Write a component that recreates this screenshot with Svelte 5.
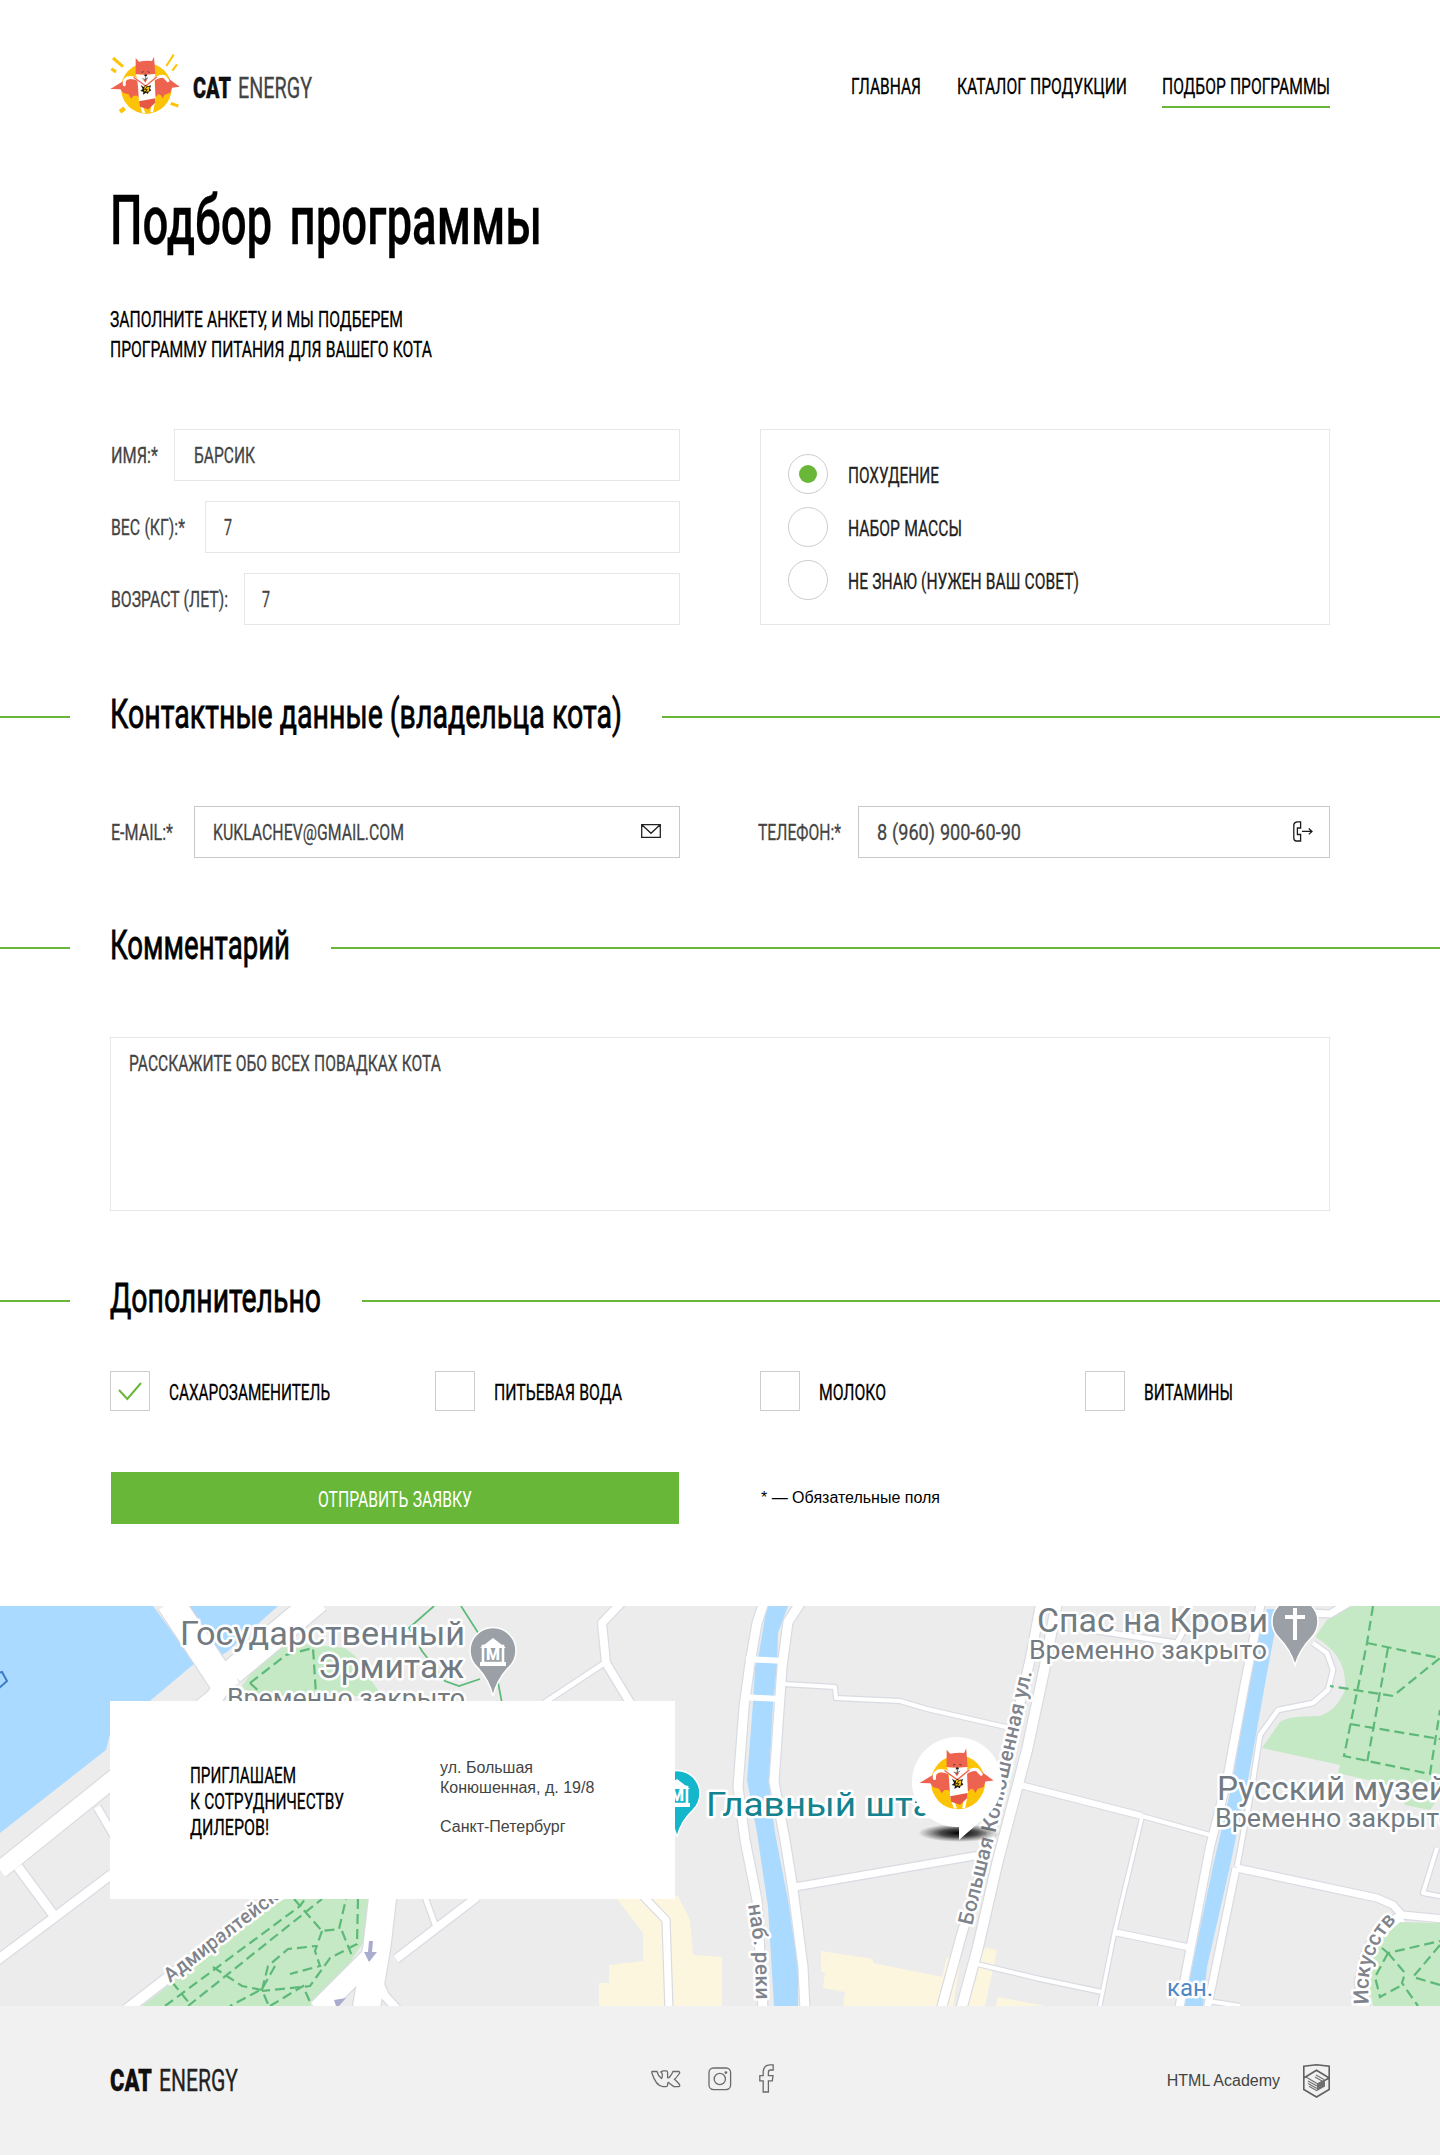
<script>
  const nav = [
    { text: 'ГЛАВНАЯ', w: 70, gap: 36 },
    { text: 'КАТАЛОГ ПРОДУКЦИИ', w: 170, gap: 35 },
    { text: 'ПОДБОР ПРОГРАММЫ', w: 168, gap: 0, active: true }
  ];
  const cat = [
    { label: 'ИМЯ:*', lw: 47, box: 506, value: 'БАРСИК', vw: 61, pad: 19 },
    { label: 'ВЕС (КГ):*', lw: 74, box: 475, value: '7', vw: 8, pad: 18 },
    { label: 'ВОЗРАСТ (ЛЕТ):', lw: 117, box: 436, value: '7', vw: 8, pad: 17 }
  ];
  const goals = [
    { text: 'ПОХУДЕНИЕ', w: 91, on: true },
    { text: 'НАБОР МАССЫ', w: 114 },
    { text: 'НЕ ЗНАЮ (НУЖЕН ВАШ СОВЕТ)', w: 231 }
  ];
  const extras = [
    { text: 'САХАРОЗАМЕНИТЕЛЬ', w: 161, on: true },
    { text: 'ПИТЬЕВАЯ ВОДА', w: 128 },
    { text: 'МОЛОКО', w: 67 },
    { text: 'ВИТАМИНЫ', w: 89 }
  ];
  // Streets: points and width
  const roads = [
    ['170,-4 228,84', 27], ['318,-6 232,66 214,92 0,264', 17], ['318,-6 232,66', 25],
    ['97,201 114,230', 7], ['18,261 55,311', 9], ['-4,355 55,311 112,268', 9],
    ['126,404 170,370 275,288', 10], ['383,288 377,340 366,404', 27], ['370,352 318,404', 20],
    ['396,353 477,291', 8], ['425,291 436,321', 5], ['368,352 385,390 398,404', 8],
    ['622,-4 602,17 606,57 632,100', 8], ['606,56 544,97', 5],
    ['643,290 666,314 669,404', 7],
    ['764,-4 757,17 750,57 744,101 738,181 745,234 757,294 763,404', 9],
    ['801,-4 788,16 782,61 774,176 785,234 793,284 803,361 805,404', 9],
    ['784,78 835,81 836,92 900,95 927,103 1010,122', 4],
    ['795,281 980,249', 7],
    ['1041,-4 1030,54 1003,170 985,254 962,327 941,404', 9],
    ['1057,-4 1045,60 1027,144 998,254 978,341 961,404', 10],
    ['1020,179 1040,184 1142,210', 6], ['1142,210 1210,229', 4],
    ['1142,211 1115,324 1099,404', 3.5], ['1114,326 1187,341', 6], ['973,357 1040,373 1102,386', 4],
    ['1090,24 1177,37 1187,18', 5],
    ['1261,-4 1245,77 1227,174 1210,241 1187,361 1179,404', 8],
    ['1313,37 1327,47 1333,64 1328,84 1313,97 1278,104 1260,129 1252,181 1237,261', 4.5],
    ['1236,262 1207,404', 7], ['1237,262 1377,292 1393,299 1402,309 1444,313', 7],
    ['1402,311 1384,322 1368,345 1361,375 1364,404', 12],
    ['1437,242 1423,287 1444,291', 4], ['1310,7 1330,8 1350,-4', 7], ['1208,395 1240,400', 4]
  ];
  const bridges = ['746,53 784,55', '742,91 780,93'];
  const trails = [
    '250,77 286,49 313,42 316,88', '250,77 262,88',
    '165,400 300,300 305,293', '188,400 322,293', '275,360 262,383 230,400', '294,293 322,325 339,323 346,293',
    '358,293 357,338 330,352 310,380 262,385', '172,376 190,398', '213,361 242,380 262,384 268,398', '322,325 315,345 320,360 290,368',
    '262,384 268,360 288,343 316,340', '342,325 352,350', '270,400 303,380 310,396',
    '1373,0 1367,37 1344,150 1430,168 1440,104', '1367,37 1440,52 1393,90 1330,80', '1388,42 1367,157', '1350,118 1440,133',
    '1382,342 1388,347 1440,335', '1388,347 1405,367 1402,377 1418,400', '1388,347 1375,371 1380,391 1402,379', '1440,339 1413,371 1440,379'
  ];
</script>

<!-- Condensed lettering: cap height and advance width are set explicitly -->
{#snippet cond(text, w, cap = 16, cls = '')}
  <svg class="cond {cls}" width={w} height={cap * 1.5}>
    <text y={cap * 1.25 - 0.4} font-size={cap / 0.711} textLength={w} lengthAdjust="spacingAndGlyphs">{text}</text>
  </svg>
{/snippet}

{#snippet hero()}
  <circle cx="170" cy="144" r="76" fill="#fdc407" />
  <path fill="#ee6350" d="M62 146L100 123L140 111L152 176L143 166L132 166L124 175L117 162L101 158L92 147Z" />
  <path fill="#ee6350" d="M270 139L234 113L196 110L196 172L206 162L213 164L219 174L225 163L242 157L247 142Z" />
  <path fill="none" stroke="#fff" stroke-width="9" stroke-linecap="round" d="M150 119Q126 108 113 113Q101 119 104 133M190 118Q212 105 224 109L235 121" />
  <path fill="#fff" d="M143 106H194L198 176L190 216H182L186 188H156L167 218H158L148 186Z" />
  <path fill="#fdc407" d="M166 207L176 204L181 219H169Z" />
  <path fill="#e65744" d="M148 183L197 174L196 188L176 207L151 199Z" />
  <path fill="#ee6350" d="M138 53L148 64Q168 60 187 62L193 49L197 101Q168 106 138 102Z" />
  <path fill="#fff" d="M138 102Q168 105 197 101L195 108L178 122L168 131L157 122L141 109Z" />
  <path fill="none" stroke="#ee6350" stroke-width="4" d="M132 111L168 137L202 109" />
  <path fill="#e65744" d="M161 119L173 117L167 127Z" />
  <path fill="none" stroke="#222" stroke-width="2" d="M156 96L162 94M174 94L180 96M158 115Q168 122 175 112M168 108V117" />
  <ellipse cx="168" cy="105" rx="4.5" ry="3.2" fill="#222" />
  <path fill="#1c1810" d="M153 134L162 140L168 134L173 138L184 135L181 145L185 150L177 155L175 161L169 157L160 163L161 154L152 152L159 146Z" />
  <path fill="#fdc407" d="M165 137L180 140L177 154L163 153Z" />
  <path fill="none" stroke="#1c1810" stroke-width="2.5" d="M175 137L165 148H173L164 157" />
{/snippet}

{#snippet divider(text, w, extra = '')}
  <div class="divider {extra}">
    <i class="stub"></i>
    <h2>{@render cond(text, w, 29, 'head')}</h2>
    <i class="rule"></i>
  </div>
{/snippet}

{#snippet museum()}
  <path fill="none" stroke="#fff" stroke-width="2.6" d="M-10 -7H10V10H-10Z" />
  <path fill="#fff" d="M-13 -5L0 -15L13 -5ZM-13 9H13V13H-13Z" />
  <text y="7" font-size="16" font-weight="900" text-anchor="middle" fill="#fff">М</text>
{/snippet}

<header>
  <div class="logo">
    <svg width="70" height="61" viewBox="61 41 210 183">
      {@render hero()}
      <path stroke="#fdc407" fill="none" stroke-width="9" d="M70 53L100 79M65 85L79 95M243 189L266 197" />
      <path stroke="#fdc407" fill="none" stroke-width="6" d="M252 43L230 77M262 72L248 91" />
      <path stroke="#fdc407" fill="none" stroke-width="13" d="M91 214L105 204" />
    </svg>
    {@render cond('CAT', 38, 21, 'heavy')}
    {@render cond('ENERGY', 74, 21, 'soft')}
  </div>
  <nav>
    {#each nav as n}
      <a class:active={n.active} style:margin-right="{n.gap}px">{@render cond(n.text, n.w)}</a>
    {/each}
  </nav>
</header>

<div class="intro">
  <h1>{@render cond('Подбор программы', 432, 49, 'title')}</h1>
  <p>{@render cond('ЗАПОЛНИТЕ АНКЕТУ, И МЫ ПОДБЕРЕМ', 293)}</p>
  <p>{@render cond('ПРОГРАММУ ПИТАНИЯ ДЛЯ ВАШЕГО КОТА', 322)}</p>
</div>

<main>
  <section class="wrap about">
    <div class="fields">
      {#each cat as f}
        <div class="field">
          {@render cond(f.label, f.lw, 16, 'soft')}
          <div class="input" style:width="{f.box}px" style:padding-left="{f.pad}px">
            {@render cond(f.value, f.vw, 16, 'soft')}
          </div>
        </div>
      {/each}
    </div>
    <div class="goals">
      {#each goals as g}
        <div class="goal">
          <span class="radio" class:on={g.on}></span>
          {@render cond(g.text, g.w, 16, 'dark')}
        </div>
      {/each}
    </div>
  </section>

  {@render divider('Контактные данные (владельца кота)', 512)}

  <section class="wrap contacts">
    <div class="field email">
      {@render cond('E-MAIL:*', 62, 16, 'soft')}
      <div class="input grey">
        {@render cond('KUKLACHEV@GMAIL.COM', 191, 16, 'soft')}
        <svg width="20" height="14" viewBox="0 0 20 14" fill="none" stroke="#222" stroke-width="1.3">
          <path d="M.7 4V.7H19.3V4M.7 3.4V13.3H19.3V3.4M1.2 1L10 9.3L18.8 1" />
        </svg>
      </div>
    </div>
    <div class="field phone">
      {@render cond('ТЕЛЕФОН:*', 83, 16, 'soft')}
      <div class="input grey">
        {@render cond('8 (960) 900-60-90', 144, 16, 'soft')}
        <svg width="20" height="21" viewBox="0 0 20 21" fill="none" stroke="#1a1a1a" stroke-width="1.3">
          <path d="M4 .8H7.6V7H4.4V13.5H7.6V20H3Q.8 19.5.8 17V4Q.8 1.4 4 .8ZM9 10.4H18.5M15.8 7.5L19 10.4L15.8 13.4" />
        </svg>
      </div>
    </div>
  </section>

  {@render divider('Комментарий', 180, 'next')}
  <section class="wrap comment">{@render cond('РАССКАЖИТЕ ОБО ВСЕХ ПОВАДКАХ КОТА', 312, 16, 'soft')}</section>

  {@render divider('Дополнительно', 211, 'next')}
  <section class="wrap extras">
    {#each extras as e}
      <div class="extra">
        <span class="check">
          {#if e.on}
            <svg width="24" height="19" viewBox="0 0 24 19"><path d="M1 8L9.3 17L23 1" fill="none" stroke="#68b738" stroke-width="2" /></svg>
          {/if}
        </span>
        {@render cond(e.text, e.w)}
      </div>
    {/each}
  </section>
  <section class="wrap submit">
    <button>{@render cond('ОТПРАВИТЬ ЗАЯВКУ', 154, 16, 'white')}</button>
    <span>* — Обязательные поля</span>
  </section>
</main>

<div class="map">
  <svg class="ground" width="1440" height="400" viewBox="0 0 1440 400">
    <defs>
      <radialGradient id="shade"><stop offset="0" stop-color="#000" /><stop offset=".45" stop-color="#111" stop-opacity=".75" /><stop offset="1" stop-color="#333" stop-opacity="0" /></radialGradient>
      <path id="street" d="M972 320L996 224L1013 150L1032 66" />
      <path id="quay" d="M748 299L755 345L756 400" />
      <path id="arts" d="M1369 398Q1364 346 1398 313" />
      <path id="admiral" d="M170 377L300 277" />
    </defs>
    <rect width="1440" height="400" fill="#ececec" />
    <path fill="#aadaff" d="M0 0H153L195 57L150 95L110 128L106 144L0 227ZM186 0H278L228 45L213 55Z" />
    <path fill="#c5e8c5" d="M285 36L268 44L242 80L250 90H382L355 50L345 42ZM142 400L275 297L294 290H368L365 334L353 352L344 367L310 400ZM1352 0H1440V190L1430 204L1405 199L1397 181L1338 167L1340 159L1262 142L1280 116Q1287 110 1320 110Q1337 104 1345 84Q1348 50 1315 31L1327 14Z" />
    <path fill="#fdf6df" d="M615 290H678L690 314L693 349L722 351V400H599V377H609V359L643 355V327ZM821 345L873 353V357L942 371L947 351L960 356L953 400H843L845 386L823 382L825 367L821 366ZM980 341L997 344L985 400H967ZM998 391L1045 400H996Z" />
    <path fill="#aadaff" d="M767 0L759 47L755 61L753 97L747 174L757 227L768 301L774 400H798V361L788 294L775 227L769 176L773 97L777 61L778 27L788 0ZM1267 3L1249 67L1233 174L1213 260L1192 361L1184 400H1203L1207 361L1230 260L1248 174L1267 67L1276 20V3Z" />
    {#each roads as [pts, w]}<polyline points={pts} fill="none" stroke="#d9dbe2" stroke-width={w + 2.4} stroke-linejoin="round" />{/each}
    {#each roads as [pts, w]}<polyline points={pts} fill="none" stroke="#fff" stroke-width={w} stroke-linejoin="round" />{/each}
    {#each bridges as pts}<polyline points={pts} fill="none" stroke="#fff" stroke-width="6" />{/each}
    <path fill="#c5e8c5" d="M1400 316L1440 317V400H1373L1368 377L1373 351L1383 331Z" />
    {#each trails as pts}<polyline points={pts} fill="none" stroke="#5cb978" stroke-width="2.2" stroke-dasharray="10 5" />{/each}
    <path fill="none" stroke="#5cb978" stroke-width="1.7" d="M434 0L409 22L422 45L445 75L459 80L480 73M461 0L493 50L502 97" />
    <path fill="none" stroke="#3b7cc9" stroke-width="2" d="M-2 67L2 66L7 75L-2 83" />
    <path fill="#a9accf" d="M369 335H373L372 346H377L369 356L364 346H368ZM334 394L346 392L339 400H336Z" />

    <g class="names">
      <text x="180" y="39" font-size="33.5" textLength="285" lengthAdjust="spacingAndGlyphs">Государственный</text>
      <text x="318" y="72" font-size="33.5" textLength="146" lengthAdjust="spacingAndGlyphs">Эрмитаж</text>
      <text x="227" y="101" font-size="26" textLength="238" lengthAdjust="spacingAndGlyphs">Временно закрыто</text>
      <text x="1037" y="26" font-size="33.5" textLength="231" lengthAdjust="spacingAndGlyphs">Спас на Крови</text>
      <text x="1029" y="53" font-size="25.5" textLength="238" lengthAdjust="spacingAndGlyphs">Временно закрыто</text>
      <text x="1217" y="194" font-size="33.5" textLength="231" lengthAdjust="spacingAndGlyphs">Русский музей</text>
      <text x="1215" y="221" font-size="25.5" textLength="239" lengthAdjust="spacingAndGlyphs">Временно закрыто</text>
      <text class="teal" x="706" y="210" font-size="33" textLength="247" lengthAdjust="spacingAndGlyphs">Главный штаб</text>
      <text class="blue" x="1167" y="390" font-size="24" textLength="46" lengthAdjust="spacingAndGlyphs">кан.</text>
      <g class="streets">
        <text font-size="21"><textPath href="#street" textLength="261">Большая Конюшенная ул.</textPath></text>
        <text font-size="21"><textPath href="#quay" textLength="95">наб. реки</textPath></text>
        <text font-size="21"><textPath href="#arts" textLength="91">Искусств</textPath></text>
        <text font-size="20"><textPath href="#admiral">Адмиралтейский</textPath></text>
      </g>
    </g>

    <g stroke="#fff" stroke-width="1.5">
      <path fill="#9aa0a6" d="M493 90Q489 74 478 62A23 23 0 1 1 508 62Q497 74 493 90Z" />
      <path fill="#9aa0a6" d="M1295 59Q1290 43 1279 32A23 23 0 1 1 1311 32Q1300 43 1295 59Z" />
      <path fill="#14b6cb" d="M677 231Q673 215 661 204A23 23 0 1 1 693 204Q681 215 677 231Z" />
    </g>
    <g transform="translate(493 47)">{@render museum()}</g>
    <g transform="translate(677 188)">{@render museum()}</g>
    <path fill="#fff" d="M1293 2H1297V9H1305V13H1297V34H1293V13H1285V9H1293Z" />

    <ellipse cx="959" cy="227" rx="41" ry="9" fill="url(#shade)" />
    <path fill="#fff" d="M959 234V221A45 45 0 1 1 984 212Z" />
    <g transform="translate(897.5 125) scale(.356)">{@render hero()}</g>
  </svg>
  <div class="card">
    <div class="invite">
      {@render cond('ПРИГЛАШАЕМ', 106)}
      {@render cond('К СОТРУДНИЧЕСТВУ', 154)}
      {@render cond('ДИЛЕРОВ!', 79)}
    </div>
    <address>
      <p>ул. Большая<br />Конюшенная, д. 19/8</p>
      <p>Санкт-Петербург</p>
    </address>
  </div>
</div>

<footer>
  <div class="brand">
    {@render cond('CAT', 42, 22, 'heavy')}
    {@render cond('ENERGY', 79, 22, 'dark')}
  </div>
  <div class="social">
    <svg width="30" height="18" viewBox="0 0 30 18"><path d="M1 1.5H6Q7 6 10.5 8.5Q11.5 8 11.3 4.5Q11.2 2.5 9.8 2Q11 .8 13 .8H15.5Q16.6 1 16.6 2.5V7.5Q17.5 8.5 19 6.5Q21 4 22 1.5H28Q29.4 2 28 4Q26 7 23.5 9.3Q26 11.5 28.5 14.5Q29.3 16.5 27.5 16.6H23Q21 15.5 17.5 12.5Q16.5 12.5 16.6 15Q16.4 16.6 15 16.6H12Q5 16 1 3.2Q.5 1.8 1 1.5Z" /></svg>
    <svg width="24" height="24" viewBox="0 0 24 24"><rect x="1" y="1" width="21.6" height="21.6" rx="4.5" /><circle cx="11.8" cy="12" r="5.6" /><circle cx="17.9" cy="5.6" r=".8" /></svg>
    <svg class="fb" width="15" height="29" viewBox="0 0 15 29"><path d="M4.2 28V16.8H.8V11.7H4.2V8Q4.5.8 11 .8H14.2V6H11.5Q9.4 6 9.4 8.2V11.7H14L13.3 16.8H9.4V28Z" /></svg>
  </div>
  <div class="academy">
    <span>HTML Academy</span>
    <svg width="27" height="34" viewBox="0 0 27 34">
      <path fill="none" stroke="#606060" stroke-width="1.6" d="M.8 2.3L13.5.8L26.2 2.3V25.5L13.5 33L.8 25.5ZM.8 14L13.5 6.3L26.2 14L14 20.5" />
      <path fill="#707070" d="M14 19.5L22 15.5V22.5L14 27Z" />
      <path stroke="#707070" stroke-width="1.1" d="M3 13L14 19.5M5 17L14 22M5 19.5L14 24.5M6 22.3L14 26.8M13 11L21 15.5M12 13L19 17" fill="none" />
    </svg>
  </div>
</footer>

<style>
  :global(body) { margin: 0; background: #fff; font-family: "Liberation Sans", Arial, sans-serif; }
  h1, h2, p { margin: 0; }
  svg { display: block; flex: none; }
  .cond { overflow: visible; font-family: Roboto, sans-serif; font-weight: 400; word-spacing: .5px; fill: #000; stroke: #000; stroke-width: .3px; }
  .cond.title { font-weight: 500; word-spacing: 9px; }
  .cond.head { stroke-width: .8px; word-spacing: 0; }
  .cond.heavy { font-weight: 900; fill: #111; }
  .cond.dark { fill: #222; stroke: #222; }
  .cond.soft { fill: #444; stroke: #444; }
  .cond.white { fill: #fff; stroke: none; }

  header { display: flex; justify-content: space-between; align-items: flex-start; height: 114px; padding: 54px 110px 0; box-sizing: border-box; }
  .logo { display: flex; align-items: center; }
  .logo > :global(svg:nth-child(2)) { margin: 6px 7px 0 13px; }
  .logo > :global(svg:nth-child(3)) { margin-top: 6px; }
  nav { display: flex; padding-top: 20px; }
  nav a { height: 32px; border-bottom: 2px solid transparent; }
  nav a.active { border-color: #68b738; }

  .intro { height: 315px; padding: 69px 110px 0; box-sizing: border-box; }
  h1 { margin-bottom: 50px; }
  .intro p { height: 30px; }

  .wrap { margin: 0 110px; display: flex; justify-content: space-between; }
  .about { height: 196px; }
  .fields { width: 570px; display: flex; flex-direction: column; gap: 20px; }
  .field { display: flex; justify-content: space-between; align-items: center; }
  .fields .field { padding-left: 1px; }
  .input { box-sizing: border-box; height: 52px; border: 1px solid #e6e6e6; display: flex; align-items: center; justify-content: space-between; }
  .input.grey { border-color: #c9c9c9; padding: 0 18px; }
  .input.grey > :global(svg:last-child) { margin-top: -2px; }
  .goals { box-sizing: border-box; width: 570px; border: 1px solid #e6e6e6; padding: 24px 27px; display: flex; flex-direction: column; gap: 13px; }
  .goal { display: flex; align-items: center; gap: 20px; }
  .goal > :global(svg) { margin-top: 2px; }
  .radio { width: 40px; height: 40px; box-sizing: border-box; border: 1px solid #cdcdcd; border-radius: 50%; display: grid; place-items: center; }
  .radio.on::after { content: ""; width: 18px; height: 18px; border-radius: 50%; background: #68b738; }

  .divider { display: flex; align-items: center; margin-top: 66.75px; height: 43.5px; }
  .divider.next { margin-top: 64.75px; }
  .divider i { height: 2px; background: #68b738; margin-top: 7px; }
  .stub { width: 70px; margin-right: 40px; }
  .rule { flex: 1; margin-left: 40px; }
  .next .rule { margin-left: 41px; }

  .contacts { margin-top: 70.75px; }
  .email { width: 569px; padding-left: 1px; }
  .email .input { width: 486px; }
  .phone { width: 572px; }
  .phone .input { width: 472px; padding-right: 16px; }
  .comment { box-sizing: border-box; margin-top: 70.75px; height: 174px; border: 1px solid #e6e6e6; padding: 13px 18px; }
  .extras { margin-top: 51.75px; display: grid; grid-template-columns: repeat(4, 325px); justify-content: start; }
  .extra { display: flex; align-items: center; gap: 19px; }
  .extra > :global(svg) { margin-top: 2px; }
  .check { box-sizing: border-box; width: 40px; height: 40px; border: 1px solid #cdcdcd; display: grid; place-items: center; }
  .submit { margin-top: 61px; margin-bottom: 82px; justify-content: flex-start; align-items: center; }
  button { width: 568px; height: 52px; margin: 0 82px 0 1px; padding: 2px 0 0; border: 0; background: #68b738; display: grid; place-items: center; }
  .submit span { font-size: 16px; }

  .map { height: 400px; display: grid; overflow: hidden; }
  .ground, .card { grid-area: 1 / 1; }
  .ground { font-family: Roboto, sans-serif; }
  .names text { fill: #737b82; stroke: #fff; stroke-width: 5px; stroke-linejoin: round; paint-order: stroke; }
  .names .streets text { fill: #7f848c; font-weight: 500; }
  .names .teal { fill: #15838f; }
  .names .blue { fill: #4d87c7; }
  .card { z-index: 1; box-sizing: border-box; width: 565px; height: 198px; margin: 95px 0 0 110px; padding: 55px 80px; background: #fff; display: flex; }
  .invite { width: 250px; padding-top: 7px; display: flex; flex-direction: column; gap: 2px; }
  address { font-style: normal; font-size: 16px; line-height: 20px; color: #444; white-space: nowrap; padding-top: 2px; }
  address p + p { margin-top: 19px; }

  footer { box-sizing: border-box; height: 149px; padding: 58px 110px 0; background: #f1f1f1; display: grid; grid-template-columns: 541px 1fr auto; align-items: start; }
  .brand { display: flex; gap: 7px; }
  .social { display: flex; align-items: center; gap: 27px; height: 30px; }
  .social svg { fill: none; stroke: #6b6b6b; stroke-width: 1.3; }
  .social .fb { margin-top: -2px; }
  .academy { display: flex; align-items: center; gap: 23px; color: #444; font-size: 16px; }
</style>
